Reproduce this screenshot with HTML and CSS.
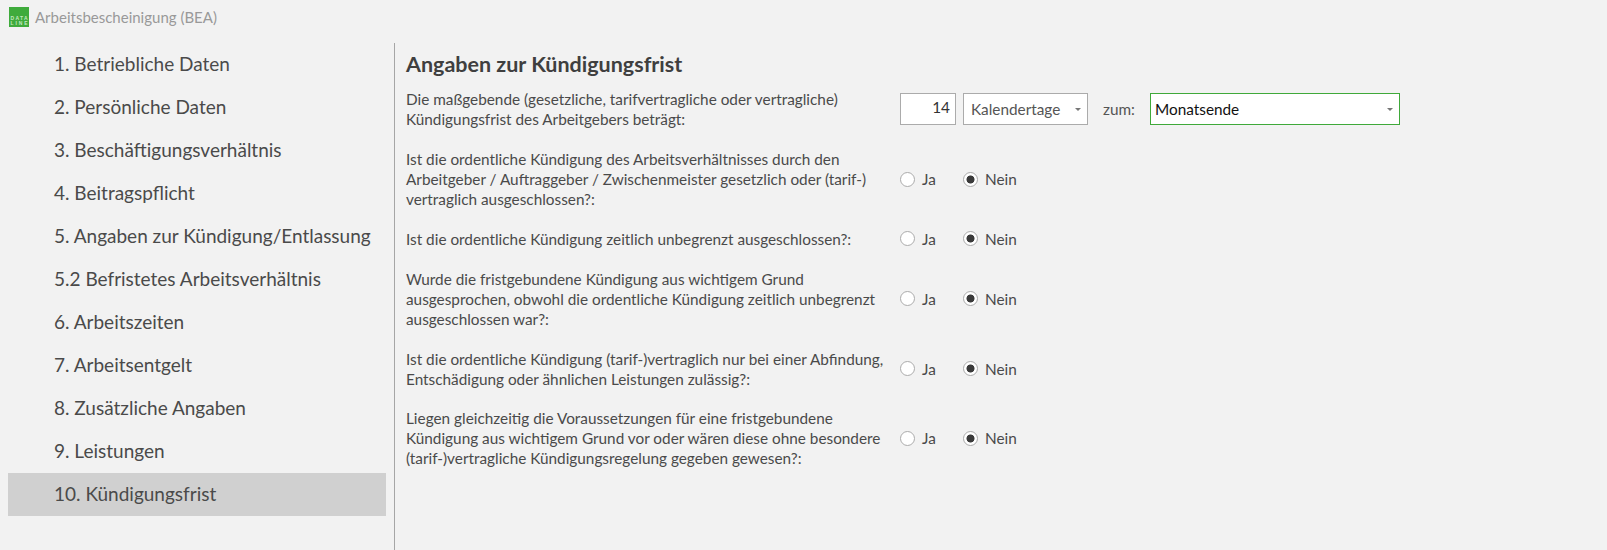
FILE: index.html
```html
<!DOCTYPE html>
<html lang="de">
<head>
<meta charset="utf-8">
<title>Arbeitsbescheinigung (BEA)</title>
<link rel="stylesheet" href="styles.css">
</head>
<body>
<header class="titlebar">
  <svg class="logo" width="20" height="20" viewBox="0 0 20 20"><rect width="20" height="20" fill="#3fab3c"/><text class="logo-text" x="10" y="12.5" textLength="17">DATA</text><text class="logo-text" x="10" y="17.5" textLength="17">LINE</text></svg>
  <span class="apptitle">Arbeitsbescheinigung (BEA)</span>
</header>
<div class="main">
  <nav class="nav">
    <div class="nav-item">1. Betriebliche Daten</div>
    <div class="nav-item">2. Persönliche Daten</div>
    <div class="nav-item">3. Beschäftigungsverhältnis</div>
    <div class="nav-item">4. Beitragspflicht</div>
    <div class="nav-item">5. Angaben zur Kündigung/Entlassung</div>
    <div class="nav-item">5.2 Befristetes Arbeitsverhältnis</div>
    <div class="nav-item">6. Arbeitszeiten</div>
    <div class="nav-item">7. Arbeitsentgelt</div>
    <div class="nav-item">8. Zusätzliche Angaben</div>
    <div class="nav-item">9. Leistungen</div>
    <div class="nav-item active">10. Kündigungsfrist</div>
  </nav>
  <section class="content">
    <h1 class="heading">Angaben zur Kündigungsfrist</h1>
    <div class="row first">
      <div class="label">Die maßgebende (gesetzliche, tarifvertragliche oder vertragliche)<br>Kündigungsfrist des Arbeitgebers beträgt:</div>
      <div class="controls">
        <div class="field number">14</div>
        <div class="field select short"><span>Kalendertage</span><i class="caret"></i></div>
        <span class="zum">zum:</span>
        <div class="field select long"><span>Monatsende</span><i class="caret"></i></div>
      </div>
    </div>
    <div class="row">
      <div class="label">Ist die ordentliche Kündigung des Arbeitsverhältnisses durch den<br>Arbeitgeber / Auftraggeber / Zwischenmeister gesetzlich oder (tarif-)<br>vertraglich ausgeschlossen?:</div>
      <div class="controls"><span class="radio"><i class="dot"></i>Ja</span><span class="radio on"><i class="dot"></i>Nein</span></div>
    </div>
    <div class="row">
      <div class="label">Ist die ordentliche Kündigung zeitlich unbegrenzt ausgeschlossen?:</div>
      <div class="controls"><span class="radio"><i class="dot"></i>Ja</span><span class="radio on"><i class="dot"></i>Nein</span></div>
    </div>
    <div class="row">
      <div class="label">Wurde die fristgebundene Kündigung aus wichtigem Grund<br>ausgesprochen, obwohl die ordentliche Kündigung zeitlich unbegrenzt<br>ausgeschlossen war?:</div>
      <div class="controls"><span class="radio"><i class="dot"></i>Ja</span><span class="radio on"><i class="dot"></i>Nein</span></div>
    </div>
    <div class="row">
      <div class="label">Ist die ordentliche Kündigung (tarif-)vertraglich nur bei einer Abfindung,<br>Entschädigung oder ähnlichen Leistungen zulässig?:</div>
      <div class="controls"><span class="radio"><i class="dot"></i>Ja</span><span class="radio on"><i class="dot"></i>Nein</span></div>
    </div>
    <div class="row">
      <div class="label">Liegen gleichzeitig die Voraussetzungen für eine fristgebundene<br>Kündigung aus wichtigem Grund vor oder wären diese ohne besondere<br>(tarif-)vertragliche Kündigungsregelung gegeben gewesen?:</div>
      <div class="controls"><span class="radio"><i class="dot"></i>Ja</span><span class="radio on"><i class="dot"></i>Nein</span></div>
    </div>
  </section>
</div>
</body>
</html>
```
FILE: styles.css
```css
* { box-sizing: border-box; }
html, body { margin: 0; height: 100%; }
body {
  background: #f2f2f2;
  color: #4a4a4a;
  font-family: Lato, "Open Sans", sans-serif;
  font-size: 15.33px;
  overflow: hidden;
}
.titlebar {
  height: 43px;
  padding: 7px 0 0 9px;
  display: flex;
  align-items: flex-start;
  gap: 6px;
}
.logo { display: block; }
.logo-text {
  font-family: "Liberation Sans", sans-serif;
  font-size: 5px;
  font-weight: 700;
  text-anchor: middle;
  fill: #c4e8c0;
}
.apptitle { font-size: 15px; line-height: 20px; color: #999; }
.main { display: flex; height: 507px; }
.nav {
  width: 395px;
  padding: 0 8px;
  border-right: 1px solid #a6a6a6;
}
.nav-item {
  height: 43px;
  line-height: 41px;
  padding-left: 46px;
  font-size: 19px;
  color: #4a4a4a;
}
.nav-item.active { background: #d0d0d0; }
.content { flex: 1; padding: 6px 0 0 11px; }
.heading {
  margin: 0 0 10.4px;
  font-size: 21.5px;
  line-height: 30px;
  font-weight: 700;
  color: #3f3f3f;
}
.row { display: flex; align-items: center; margin-bottom: 19.8px; }
.label { width: 494px; line-height: 20px; white-space: nowrap; }
.controls { display: flex; align-items: center; height: 20px; }
.field {
  height: 32px;
  background: #fff;
  border: 1px solid #ababab;
  display: flex;
  align-items: center;
  flex: none;
}
.number { width: 56px; justify-content: flex-end; padding: 0 5px 4px 0; color: #333; }
.select { justify-content: space-between; padding: 0 6px 0 7px; }
.short { width: 125px; margin-left: 7px; color: #555; }
.long { width: 250px; border-color: #3fa93a; color: #111; padding-left: 4px; }
.zum { width: 62px; padding-left: 15px; color: #555; flex: none; }
.caret {
  width: 0; height: 0;
  border-left: 3px solid transparent;
  border-right: 3px solid transparent;
  border-top: 3px solid #777;
}
.radio { display: flex; align-items: center; width: 63px; flex: none; }
.radio.on { width: auto; }
.dot {
  width: 15px; height: 15px;
  margin-right: 7px;
  border: 1px solid #ababab;
  border-radius: 50%;
  background: #fff;
  flex: none;
}
.radio.on .dot { background: radial-gradient(circle, #3a3a3a 0 3.6px, #fff 4.4px); }
```
